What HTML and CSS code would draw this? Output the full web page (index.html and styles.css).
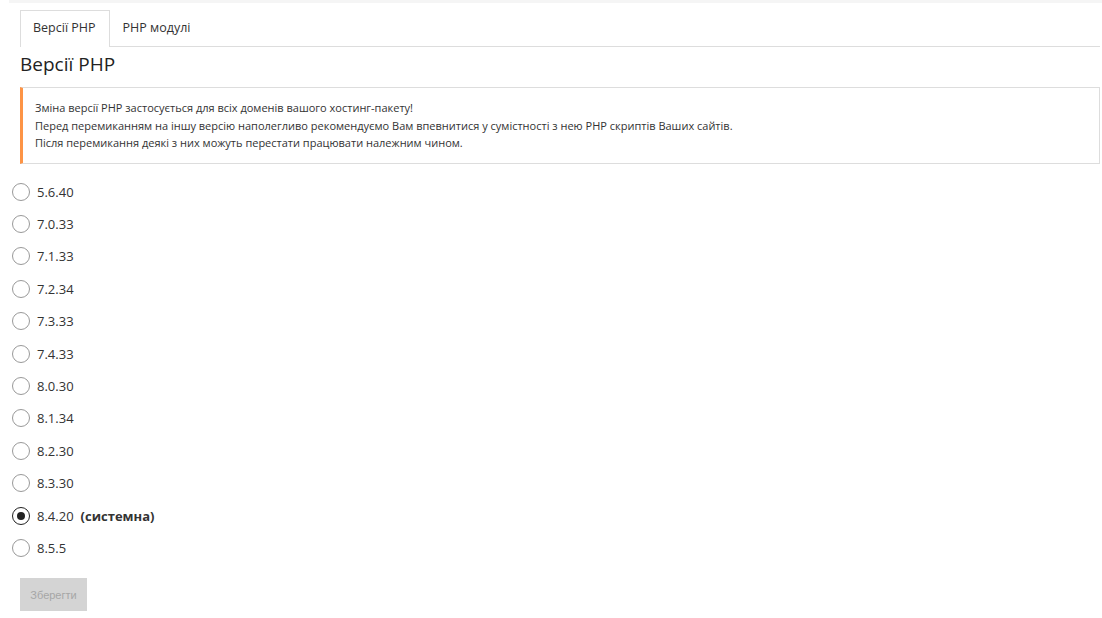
FILE: index.html
```html
<!DOCTYPE html>
<html lang="uk">
<head>
  <meta charset="UTF-8">
  <title>Версії PHP</title>
  <link rel="stylesheet" href="styles.css">
</head>
<body>

  <div class="top-strip"></div>

  <div class="page">
    <ul class="tabs">
      <li class="tab active">Версії PHP</li>
      <li class="tab">PHP модулі</li>
    </ul>

    <h2 class="title">Версії PHP</h2>

    <div class="alert">
      Зміна версії PHP застосується для всіх доменів вашого хостинг-пакету!<br>
      Перед перемиканням на іншу версію наполегливо рекомендуємо Вам впевнитися у сумістності з нею PHP скриптів Ваших сайтів.<br>
      Після перемикання деякі з них можуть перестати працювати належним чином.
    </div>
  </div>

  <form class="versions">
    <label class="version"><input type="radio" name="php" value="5.6.40"> 5.6.40</label>
    <label class="version"><input type="radio" name="php" value="7.0.33"> 7.0.33</label>
    <label class="version"><input type="radio" name="php" value="7.1.33"> 7.1.33</label>
    <label class="version"><input type="radio" name="php" value="7.2.34"> 7.2.34</label>
    <label class="version"><input type="radio" name="php" value="7.3.33"> 7.3.33</label>
    <label class="version"><input type="radio" name="php" value="7.4.33"> 7.4.33</label>
    <label class="version"><input type="radio" name="php" value="8.0.30"> 8.0.30</label>
    <label class="version"><input type="radio" name="php" value="8.1.34"> 8.1.34</label>
    <label class="version"><input type="radio" name="php" value="8.2.30"> 8.2.30</label>
    <label class="version"><input type="radio" name="php" value="8.3.30"> 8.3.30</label>
    <label class="version"><input type="radio" name="php" value="8.4.20" checked> 8.4.20 <b class="system">(системна)</b></label>
    <label class="version"><input type="radio" name="php" value="8.5.5"> 8.5.5</label>

    <button type="button" class="save" disabled>Зберегти</button>
  </form>

</body>
</html>
```

FILE: styles.css
```css
body {
  margin: 0;
  font-family: "Open Sans", "Noto Sans", sans-serif;
  color: #333;
  background: #fff;
}
.top-strip {
  height: 3px;
  margin-left: 9px;
  background-color: #f5f5f5;
}
.page {
  padding: 7px 2px 0 20px;
}
.tabs {
  display: flex;
  list-style: none;
  margin: 0;
  padding: 0;
  border-bottom: 1px solid #ddd;
}
.tab {
  height: 35px;
  line-height: 34px;
  padding: 0 13px 0 12px;
  font-size: 12.5px;
  border: 1px solid transparent;
  border-bottom: none;
  margin-bottom: -1px;
}
.tab.active {
  border-color: #ddd;
  background: #fff;
  height: 36px;
}
.title {
  margin: 4px 0 0;
  font-size: 19px;
  font-weight: normal;
  line-height: 26px;
  color: #222;
}
.alert {
  margin-top: 10px;
  padding: 11px 12px 11px 12px;
  border: 1px solid #ddd;
  border-left: 3px solid #fd9446;
  font-size: 11px;
  line-height: 17.5px;
  color: #333;
}
.versions {
  display: flex;
  flex-direction: column;
  align-items: flex-start;
  padding: 12px 0 0 12px;
}
.version {
  display: flex;
  align-items: center;
  height: 32.4px;
  font-size: 13px;
  color: #333;
  cursor: pointer;
}
.version input {
  appearance: none;
  width: 18px;
  height: 18px;
  margin: 0 7px 0 0;
  border: 1px solid #999;
  border-radius: 50%;
  background: #fff;
  position: relative;
}
.version input:checked {
  border-color: #222;
}
.version input:checked::after {
  content: "";
  position: absolute;
  left: 4px;
  top: 4px;
  width: 8px;
  height: 8px;
  border-radius: 50%;
  background: #222;
}
.system {
  margin-left: 7px;
  font-weight: bold;
}
.save {
  margin: 14px 0 0 8px;
  width: 67px;
  height: 33px;
  border: none;
  background-color: #d4d4d4;
  color: #a6a6a6;
  font-family: "Liberation Sans", Arial, sans-serif;
  font-size: 11px;
}
```
